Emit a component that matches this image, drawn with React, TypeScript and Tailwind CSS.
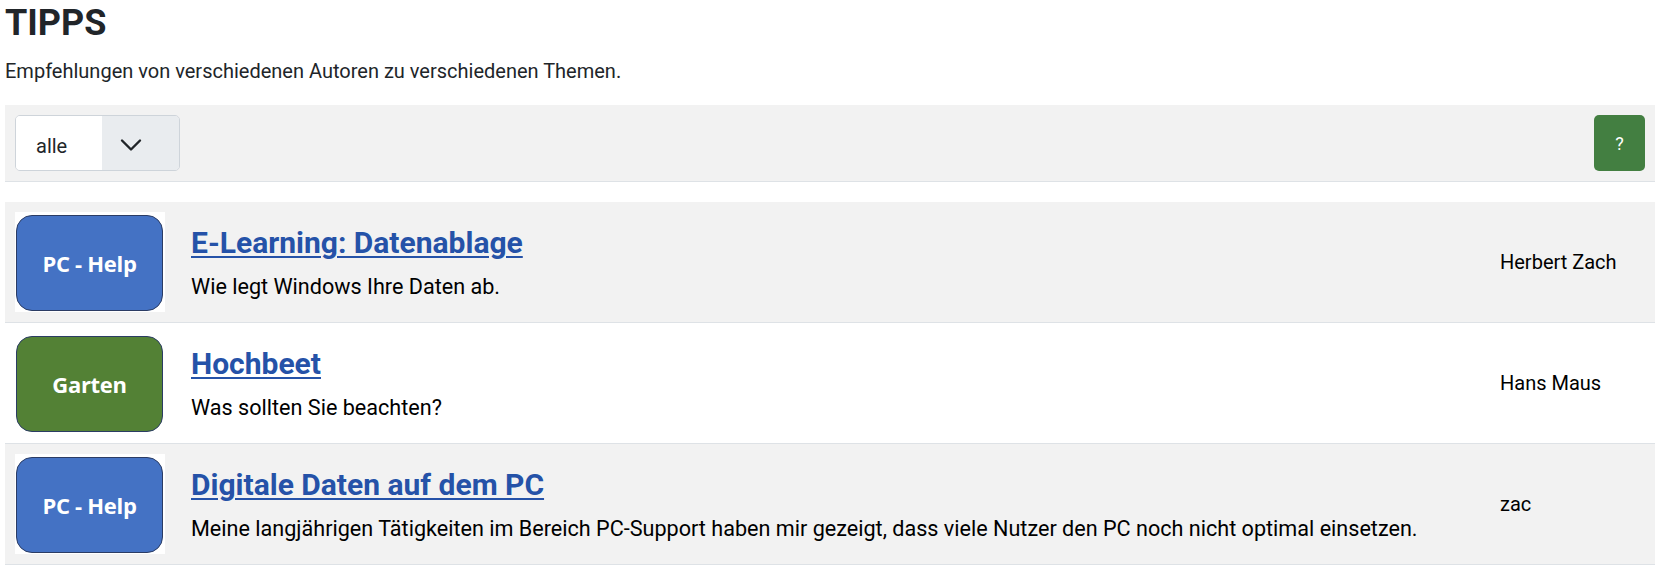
import React from 'react';

type Tipp = {
  id: number;
  category: 'PC - Help' | 'Garten';
  title: string;
  teaser: string;
  author: string;
};

const tipps: Tipp[] = [
  {
    id: 1,
    category: 'PC - Help',
    title: 'E-Learning: Datenablage',
    teaser: 'Wie legt Windows Ihre Daten ab.',
    author: 'Herbert Zach',
  },
  {
    id: 2,
    category: 'Garten',
    title: 'Hochbeet',
    teaser: 'Was sollten Sie beachten?',
    author: 'Hans Maus',
  },
  {
    id: 3,
    category: 'PC - Help',
    title: 'Digitale Daten auf dem PC',
    teaser:
      'Meine langjährigen Tätigkeiten im Bereich PC-Support haben mir gezeigt, dass viele Nutzer den PC noch nicht optimal einsetzen.',
    author: 'zac',
  },
];

// Kategorie-Bild (im Original ein Bild mit abgerundetem Rechteck)
const CategoryBadge: React.FC<{ category: Tipp['category'] }> = ({ category }) => {
  const bg = category === 'Garten' ? 'bg-[#538135]' : 'bg-[#4472c4]';
  return (
    <div className="w-[150px] h-[100px] bg-white pl-[1px] pr-[2px] pt-[3px] pb-[1px] shrink-0">
      <div
        className={`${bg} w-full h-full rounded-[16px] border-[1.5px] border-[#2b3c64] flex items-center justify-center`}
      >
        <span className="text-white font-bold text-[22px] font-['Open_Sans',sans-serif] tracking-[-0.3px]">
          {category}
        </span>
      </div>
    </div>
  );
};

const TippRow: React.FC<{ tipp: Tipp; striped: boolean }> = ({ tipp, striped }) => (
  <div
    className={`flex items-stretch border-b border-[#dee2e6] px-[10px] py-[10px] ${
      striped ? 'bg-[#f2f2f2]' : 'bg-white'
    }`}
  >
    <CategoryBadge category={tipp.category} />
    <div className="flex-1 pl-[26px] pt-[13px]">
      <a
        href="#"
        className="text-[30px] leading-[36px] font-bold text-[#2552a8] underline decoration-[2px] underline-offset-[3px]"
      >
        {tipp.title}
      </a>
      <p className="mt-[11px] text-[21.6px] leading-[30px] text-black">{tipp.teaser}</p>
    </div>
    <div className="w-[145px] shrink-0 flex items-center text-[20px] text-black">{tipp.author}</div>
  </div>
);

export default function App() {
  return (
    <div className="bg-white min-h-screen pl-[5px] pr-[9px] font-['Roboto',sans-serif] text-[#212529]">
      {/* Kopf */}
      <h1 className="mt-[3px] mb-[13px] text-[36px] leading-[40px] font-bold">TIPPS</h1>
      <p className="text-[20px] leading-[30px]">
        Empfehlungen von verschiedenen Autoren zu verschiedenen Themen.
      </p>

      {/* Filterleiste */}
      <div className="mt-[19px] bg-[#f2f2f2] border-b border-[#dee2e6] p-[10px] flex items-center justify-between">
        <div className="flex h-[56px] w-[165px] rounded-[5px] border border-[#ced4da] overflow-hidden">
          <div className="w-[86px] bg-white flex items-center pl-[20px] pt-[6px] text-[20px] text-[#212529]">
            alle
          </div>
          <div className="flex-1 bg-[#e9ecef] flex items-center pl-[17px] pt-[3px]">
            <svg width="24" height="24" viewBox="0 0 16 16" fill="none">
              <path
                d="M2 5l6 6 6-6"
                stroke="#212529"
                strokeWidth="1.6"
                strokeLinecap="round"
                strokeLinejoin="round"
              />
            </svg>
          </div>
        </div>
        <button className="w-[51px] h-[56px] rounded-[5px] bg-[#437f41] text-white text-[18px] flex items-center justify-center">
          ?
        </button>
      </div>

      {/* Liste */}
      <div className="mt-[20px]">
        {tipps.map((tipp, i) => (
          <TippRow key={tipp.id} tipp={tipp} striped={i % 2 === 0} />
        ))}
      </div>
    </div>
  );
}
